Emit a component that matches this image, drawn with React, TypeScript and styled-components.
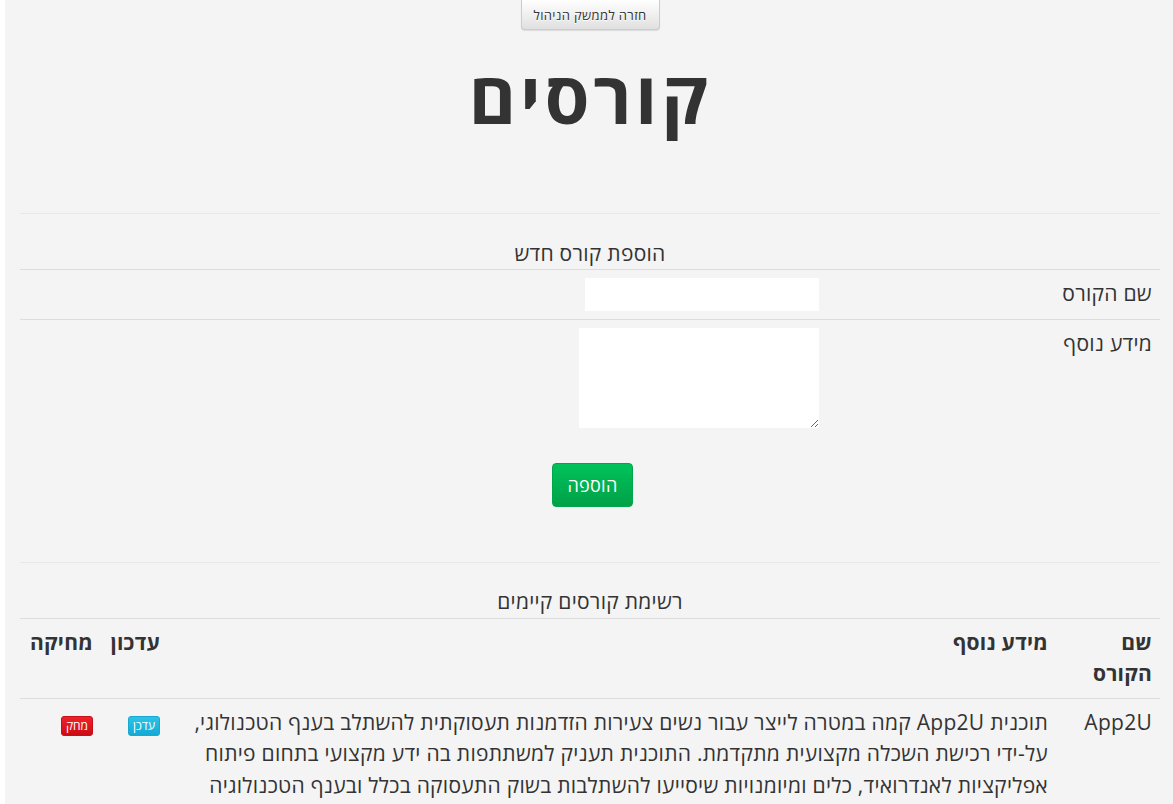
import React from "react";
import styled, { createGlobalStyle } from "styled-components";

const GlobalStyle = createGlobalStyle`
  html, body {
    margin: 0;
    padding: 0;
    background: #ffffff;
    overflow: hidden;
  }
  body {
    font-family: "Open Sans", "Noto Sans", "DejaVu Sans", sans-serif;
    color: #333333;
  }
`;

const Page = styled.div`
  box-sizing: border-box;
  width: 1170px;
  margin-left: 5px;
  min-height: 804px;
  padding: 0 15px;
  background: #f4f4f4;
  direction: rtl;
`;

const TopBar = styled.div`
  display: flex;
  justify-content: center;
`;

const BackButton = styled.button`
  box-sizing: border-box;
  height: 30px;
  padding: 5px 12px;
  font-family: inherit;
  font-size: 13px;
  letter-spacing: 0.35px;
  line-height: 18px;
  color: #333;
  background-image: linear-gradient(to bottom, #ffffff 0%, #e0e0e0 100%);
  border: 1px solid #cccccc;
  border-top: none;
  border-radius: 0 0 4px 4px;
  text-shadow: 0 1px 0 #fff;
  box-shadow: inset 0 1px 0 rgba(255, 255, 255, 0.15), 0 1px 1px rgba(0, 0, 0, 0.1);
  cursor: pointer;
`;

const Title = styled.h1`
  margin: 16px 0 0;
  text-align: center;
  font-size: 72px;
  font-weight: 700;
  letter-spacing: 4px;
  line-height: 1.4;
  color: #333;
`;

const Divider = styled.hr<{ $top: number }>`
  margin: ${(p) => p.$top}px 0 0;
  border: 0;
  border-top: 1px solid #e8e8e8;
`;

const Table = styled.table`
  width: 100%;
  border-collapse: collapse;
  font-size: 21px;
  letter-spacing: 0.27px;
  line-height: 31.5px;
`;

const Caption = styled.caption<{ $top: number }>`
  margin-top: ${(p) => p.$top}px;
  text-align: center;
  color: #333;
`;

const Cell = styled.td<{ $width?: number }>`
  padding: 8px;
  border-top: 1px solid #dddddd;
  vertical-align: top;
  text-align: right;
  ${(p) => (p.$width ? `width: ${p.$width}px;` : "")}
`;

const HeadCell = styled.th<{ $width?: number }>`
  padding: 8px;
  border-top: 1px solid #dddddd;
  border-bottom: 1px solid #dddddd;
  vertical-align: top;
  text-align: right;
  font-weight: 700;
  ${(p) => (p.$width ? `width: ${p.$width}px;` : "")}
`;

const TextInput = styled.input`
  box-sizing: border-box;
  display: block;
  width: 234px;
  height: 33px;
  border: none;
  background: #fff;
  padding: 0 6px;
  font-family: inherit;
`;

const TextArea = styled.textarea`
  box-sizing: border-box;
  display: block;
  width: 240px;
  height: 100px;
  border: none;
  background: #fff;
  font-family: inherit;
  direction: ltr;
`;

const SubmitRow = styled.div`
  display: flex;
  justify-content: center;
  padding: 27px 0 0 0;
  margin-right: -5px;
`;

const AddButton = styled.button`
  box-sizing: border-box;
  height: 44px;
  padding: 9px 14px;
  font-family: inherit;
  font-size: 18px;
  letter-spacing: 0.3px;
  line-height: 24px;
  color: #fff;
  background-image: linear-gradient(to bottom, #00c25c 0%, #00a247 100%);
  border: 1px solid #00a64a;
  border-radius: 4px;
  cursor: pointer;
`;

const SmallButton = styled.button<{ $kind: "info" | "danger" }>`
  box-sizing: border-box;
  height: 20px;
  padding: 0 4px;
  margin-top: 5px;
  font-family: inherit;
  font-size: 12px;
  line-height: 18px;
  color: #fff;
  border-radius: 3px;
  border: 1px solid ${(p) => (p.$kind === "info" ? "#1aa8d0" : "#c8101a")};
  background-image: ${(p) =>
    p.$kind === "info"
      ? "linear-gradient(to bottom, #2cc3e6 0%, #14aad6 100%)"
      : "linear-gradient(to bottom, #ee2228 0%, #cc0c14 100%)"};
  cursor: pointer;
`;

export default function App() {
  return (
    <>
      <GlobalStyle />
      <Page>
        <TopBar>
          <BackButton>חזרה לממשק הניהול</BackButton>
        </TopBar>
        <Title>קורסים</Title>
        <Divider $top={66} />
        <Table>
          <Caption $top={24}>הוספת קורס חדש</Caption>
          <tbody>
            <tr>
              <Cell $width={317}>שם הקורס</Cell>
              <Cell>
                <TextInput type="text" />
              </Cell>
            </tr>
            <tr>
              <Cell $width={317}>מידע נוסף</Cell>
              <Cell>
                <TextArea />
              </Cell>
            </tr>
          </tbody>
        </Table>
        <SubmitRow>
          <AddButton>הוספה</AddButton>
        </SubmitRow>
        <Divider $top={55} />
        <Table>
          <Caption $top={23}>רשימת קורסים קיימים</Caption>
          <thead>
            <tr>
              <HeadCell $width={88}>שם הקורס</HeadCell>
              <HeadCell>מידע נוסף</HeadCell>
              <HeadCell $width={51}>עדכון</HeadCell>
              <HeadCell $width={65}>מחיקה</HeadCell>
            </tr>
          </thead>
          <tbody>
            <tr>
              <Cell>App2U</Cell>
              <Cell>
                תוכנית App2U קמה במטרה לייצר עבור נשים צעירות הזדמנות תעסוקתית להשתלב בענף הטכנולוגי,
                על-ידי רכישת השכלה מקצועית מתקדמת. התוכנית תעניק למשתתפות בה ידע מקצועי בתחום פיתוח
                אפליקציות לאנדרואיד, כלים ומיומנויות שיסייעו להשתלבות בשוק התעסוקה בכלל ובענף הטכנולוגיה
              </Cell>
              <Cell>
                <SmallButton $kind="info">עדכן</SmallButton>
              </Cell>
              <Cell>
                <SmallButton $kind="danger">מחק</SmallButton>
              </Cell>
            </tr>
          </tbody>
        </Table>
      </Page>
    </>
  );
}
